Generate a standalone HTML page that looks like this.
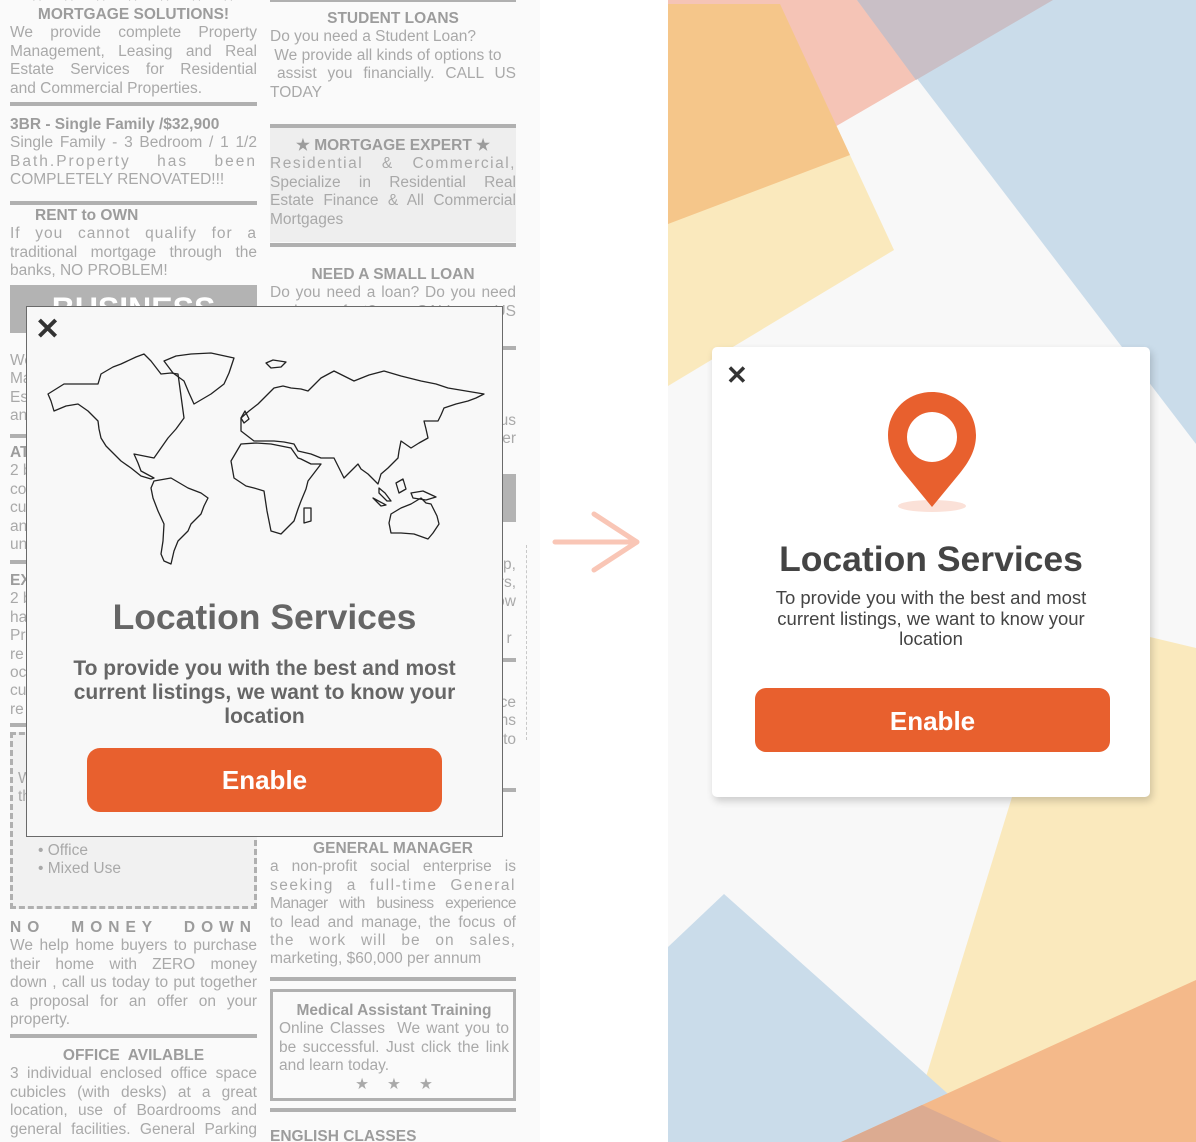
<!DOCTYPE html>
<html><head><meta charset="utf-8">
<style>
*{margin:0;padding:0;box-sizing:border-box}
body{width:1196px;height:1142px;position:relative;overflow:hidden;background:#fff;font-family:"Liberation Sans",sans-serif}
#left{position:absolute;left:0;top:0;width:540px;height:1142px;background:#fafafa;overflow:hidden}
.b{position:absolute;font-size:15.5px;line-height:18.4px;color:#a9a9a9}
.b div{white-space:nowrap}
.j{text-align:justify;text-align-last:justify;white-space:normal!important;height:18.4px;overflow:hidden}
.h{font-weight:bold;color:#9c9c9c;font-size:15.5px}
.c{text-align:center}
.rule{position:absolute;height:4px;background:#b0b0b0}
#lm{position:absolute;left:26px;top:306px;width:477px;height:531px;background:#f8f8f8;border:1.5px solid #6a6a6a}
.x{position:absolute;font-size:30px;font-weight:bold;line-height:1}
#right{position:absolute;left:668px;top:0;width:528px;height:1142px;background:#f8f8f8;overflow:hidden}
#rm{position:absolute;left:712px;top:347px;width:438px;height:450px;background:#fff;border-radius:5px;box-shadow:2px 4px 8px rgba(0,0,0,.18)}
.btn{position:absolute;background:#e8602e;color:#fff;font-weight:bold;text-align:center}
</style></head><body>
<div id="left">
 <div class="b" style="left:30px;top:-12px;color:#bbb;letter-spacing:18px">★★★★★★★</div>
 <div class="rule" style="left:270px;top:-2px;width:246px"></div>
 <div class="b" style="left:10px;top:6px;width:247px">
  <div class="h c">MORTGAGE SOLUTIONS!</div>
  <div class="j">We provide complete Property</div>
  <div class="j">Management, Leasing and Real</div>
  <div class="j">Estate Services for Residential</div>
  <div>and Commercial Properties.</div>
 </div>
 <div class="rule" style="left:10px;top:102px;width:247px"></div>
 <div class="b" style="left:10px;top:116px;width:247px">
  <div class="h">3BR - Single Family /$32,900</div>
  <div class="j">Single Family - 3 Bedroom / 1 1/2</div>
  <div class="j" style="letter-spacing:2px">Bath.Property has been</div>
  <div>COMPLETELY RENOVATED!!!</div>
 </div>
 <div class="rule" style="left:10px;top:201px;width:247px"></div>
 <div class="b" style="left:10px;top:207px;width:247px">
  <div class="h" style="padding-left:25px">RENT to OWN</div>
  <div class="j" style="letter-spacing:1px">If you cannot qualify for a</div>
  <div class="j">traditional mortgage through the</div>
  <div>banks, NO PROBLEM!</div>
 </div>
 <div style="position:absolute;left:10px;top:285px;width:247px;height:48px;background:#b3b3b3;color:#fff;font-weight:bold;font-size:32px;text-align:center;line-height:48px">BUSINESS</div>
 <div class="b" style="left:10px;top:352px;width:247px">
  <div>We provide all kinds</div><div>Management and more</div><div>Estate services</div><div>and more</div>
 </div>
 <div class="rule" style="left:10px;top:434px;width:247px"></div>
 <div class="b" style="left:10px;top:444px;width:247px">
  <div class="h">AT</div><div>2 bedroom</div><div>condo</div><div>cu</div><div>and</div><div>un</div>
 </div>
 <div class="rule" style="left:10px;top:560px;width:247px"></div>
 <div class="b" style="left:10px;top:572px;width:247px">
  <div class="h">EX</div><div>2 bed</div><div>ha</div><div>Pr</div><div>re</div><div>oc</div><div>cu</div><div>re</div>
 </div>
 <div class="rule" style="left:10px;top:723px;width:247px"></div>
 <div style="position:absolute;left:10px;top:732px;width:247px;height:177px;background:#f1f1f1;border:3px dashed #b0b0b0"></div>
 <div class="b" style="left:18px;top:770px"><div>We</div><div>th</div></div>
 <div class="b" style="left:38px;top:842px"><div>• Office</div><div>• Mixed Use</div></div>
 <div class="b" style="left:10px;top:919px;width:247px">
  <div class="h j" style="letter-spacing:6px">NO MONEY DOWN</div>
  <div class="j">We help home buyers to purchase</div>
  <div class="j">their home with ZERO money</div>
  <div class="j">down , call us today to put together</div>
  <div class="j">a proposal for an offer on your</div>
  <div>property.</div>
 </div>
 <div class="rule" style="left:10px;top:1034px;width:247px"></div>
 <div class="b" style="left:10px;top:1047px;width:247px">
  <div class="h c">OFFICE&nbsp; AVILABLE</div>
  <div class="j">3 individual enclosed office space</div>
  <div class="j">cubicles (with desks) at a great</div>
  <div class="j">location, use of Boardrooms and</div>
  <div class="j">general facilities. General Parking</div>
 </div>
 <div class="b" style="left:270px;top:10px;width:246px">
  <div class="h c">STUDENT LOANS</div>
  <div>Do you need a Student Loan?</div>
  <div>&nbsp;We provide all kinds of options to</div>
  <div class="j" style="padding-left:7px">assist you financially. CALL US</div>
  <div>TODAY</div>
 </div>
 <div class="rule" style="left:270px;top:124px;width:246px"></div>
 <div style="position:absolute;left:270px;top:128px;width:246px;height:114px;background:#eeeeee"></div>
 <div class="b" style="left:270px;top:137px;width:246px">
  <div class="h c">★ MORTGAGE EXPERT ★</div>
  <div class="j" style="letter-spacing:1.5px">Residential &amp; Commercial,</div>
  <div class="j">Specialize in Residential Real</div>
  <div class="j">Estate Finance &amp; All Commercial</div>
  <div>Mortgages</div>
 </div>
 <div class="rule" style="left:270px;top:243px;width:246px"></div>
 <div class="b" style="left:270px;top:266px;width:246px">
  <div class="h c">NEED A SMALL LOAN</div>
  <div class="j">Do you need a loan? Do you need</div>
  <div class="j">cash fast? CALL US</div>
 </div>
 <div class="rule" style="left:270px;top:346px;width:246px"></div>
 <div class="b" style="left:270px;top:412px;width:246px;text-align:right"><div>us</div><div>other</div></div>
 <div style="position:absolute;left:480px;top:474px;width:36px;height:48px;background:#b3b3b3"></div>
 <div class="b" style="left:270px;top:556px;width:246px;text-align:right"><div>up,</div><div>rs,</div><div>ow</div><div>&nbsp;</div><div>r&nbsp;</div></div>
 <div class="rule" style="left:270px;top:658px;width:246px"></div>
 <div class="b" style="left:270px;top:694px;width:246px;text-align:right"><div>ce</div><div>ns</div><div>to</div></div>
 <div class="rule" style="left:270px;top:788px;width:246px"></div>
 <div style="position:absolute;left:526px;top:545px;height:195px;border-left:1px dashed #c8c8c8"></div>
 <div class="b" style="left:270px;top:840px;width:246px">
  <div class="h c">GENERAL MANAGER</div>
  <div class="j">a non-profit social enterprise is</div>
  <div class="j" style="letter-spacing:1.5px">seeking a full-time General</div>
  <div class="j" style="letter-spacing:-.5px">Manager with business experience</div>
  <div class="j">to lead and manage, the focus of</div>
  <div class="j" style="letter-spacing:1px">the work will be on sales,</div>
  <div>marketing, $60,000 per annum</div>
 </div>
 <div class="rule" style="left:270px;top:977px;width:246px"></div>
 <div style="position:absolute;left:270px;top:989px;width:246px;height:112px;border:3px solid #b0b0b0"></div>
 <div class="b" style="left:279px;top:1002px;width:230px">
  <div class="h c">Medical Assistant Training</div>
  <div class="j">Online Classes&nbsp; We want you to</div>
  <div class="j">be successful. Just click the link</div>
  <div>and learn today.</div>
  <div class="c" style="letter-spacing:18px;padding-left:18px">★★★</div>
 </div>
 <div class="rule" style="left:270px;top:1108px;width:246px"></div>
 <div class="b" style="left:270px;top:1128px"><div class="h">ENGLISH CLASSES</div></div>

 <div id="lm">
  <div class="x" style="left:8px;top:8px;color:#333">✕</div>
  <svg style="position:absolute;left:-26px;top:-306px" width="540" height="700" fill="none" stroke="#222" stroke-width="1.3" stroke-linejoin="round">
   <path d="M47,393 L63,383 L97,383 L100,373 L112,366 L120,363 L135,356 L143,353 L150,360 L160,373 L170,372 L177,373 L180,395 L183,417 L175,428 L167,437 L160,447 L153,457 L143,455 L133,453 L137,462 L140,470 L153,477 L150,478 L140,475 L130,467 L120,460 L113,453 L105,445 L100,437 L98,428 L97,420 L87,410 L77,403 L65,405 L53,410 L50,400 Z"/>
   <path d="M163,360 L175,355 L190,353 L210,352 L233,357 L228,372 L223,383 L210,393 L193,403 L188,392 L183,380 L172,372 Z"/>
   <path d="M153,480 L170,477 L187,487 L200,492 L207,497 L203,505 L200,513 L190,523 L187,530 L177,540 L173,550 L170,563 L163,560 L160,553 L162,540 L163,523 L157,510 L152,497 L150,487 Z"/>
   <path d="M240,430 L240,417 L248,410 L257,403 L265,395 L273,387 L282,385 L290,387 L300,388 L307,390 L315,382 L320,377 L333,370 L345,376 L353,380 L368,374 L383,370 L400,375 L420,380 L435,383 L447,387 L465,390 L483,393 L475,397 L467,400 L455,403 L443,407 L440,414 L437,420 L423,420 L425,428 L427,437 L418,442 L410,447 L400,440 L398,450 L397,457 L387,467 L380,473 L377,483 L372,478 L367,473 L360,468 L357,463 L350,470 L343,477 L338,467 L333,457 L320,457 L310,453 L297,450 L293,443 L283,441 L273,440 L263,440 L253,440 Z"/>
   <path d="M240,443 L230,460 L233,477 L245,485 L253,487 L263,490 L266,510 L270,530 L280,533 L293,520 L297,508 L300,500 L305,488 L307,480 L320,463 L310,463 L300,458 L297,457 L290,447 L270,443 L255,442 Z"/>
   <path d="M303,507 L310,507 L310,520 L303,522 Z"/>
   <path d="M390,513 L400,507 L410,503 L420,497 L425,502 L430,503 L436,515 L438,523 L432,532 L427,538 L413,533 L400,532 L390,532 L388,522 Z"/>
   <path d="M265,362 L272,359 L285,361 L280,366 L270,367 Z"/>
   <path d="M378,487 L384,492 L390,500 L386,500 L378,492 Z M395,482 L402,478 L405,488 L398,492 Z M410,492 L422,490 L435,496 L425,499 L412,497 Z M372,497 L385,504 L380,505 Z"/>
   <path d="M240,417 L244,410 L248,418 L243,422 Z"/>
  </svg>
  <div style="position:absolute;left:0;top:290px;width:100%;text-align:center;font-size:35.5px;font-weight:bold;color:#666">Location Services</div>
  <div style="position:absolute;left:0;top:350px;width:100%;text-align:center;font-size:21px;line-height:24px;font-weight:bold;color:#666">To provide you with the best and most<br>current listings, we want to know your<br>location</div>
  <div class="btn" style="left:60px;top:441px;width:355px;height:64px;border-radius:13px;font-size:26px;line-height:64px">Enable</div>
 </div>
</div>

<svg style="position:absolute;left:0;top:0" width="668" height="1142">
 <path d="M555,542 L636,542 M594,514 L637,542 L594,570" fill="none" stroke="#f9c6b6" stroke-width="5" stroke-linecap="round" stroke-linejoin="round"/>
</svg>

<div id="right">
 <svg width="528" height="1142" style="position:absolute;left:0;top:0">
  <g transform="translate(-668,0)">
   <polygon points="668,4 780,4 894,250 668,386" fill="#fae9bd"/>
   <polygon points="668,0 1053,0 668,224" fill="#f5c4b6"/>
   <polygon points="668,4 780,4 850,155 668,224" fill="#f5c68a"/>
   <polygon points="857,0 1196,0 1196,444" fill="#cadcea"/>
   <polygon points="857,0 1053,0 916,80" fill="#c9bfc6"/>
   <polygon points="1150,637 1196,648 1196,1142 906,1142 1012,797" fill="#fae9bd"/>
   <polygon points="668,947 724,894 1002,1142 668,1142" fill="#cadcea"/>
   <polygon points="841,1142 1196,980 1196,1142" fill="#f4b98a"/>
   <polygon points="841,1142 922,1105 1002,1142" fill="#dcab91"/>
  </g>
 </svg>
</div>
<div id="rm">
 <div class="x" style="left:14px;top:15px;font-size:26px;color:#333">✕</div>
 <svg style="position:absolute;left:170px;top:40px" width="100" height="130">
  <ellipse cx="50" cy="119" rx="34" ry="6" fill="#fbe1d8"/>
  <path d="M50,5 C25,5 6,24 6,48 C6,64 14,76 22,86 L50,120 L78,86 C86,76 94,64 94,48 C94,24 75,5 50,5 Z M50,25 A25,25 0 1,0 50.01,25 Z" fill="#e8602e" fill-rule="evenodd"/>
 </svg>
 <div style="position:absolute;left:0;top:192px;width:100%;text-align:center;font-size:35.5px;font-weight:bold;color:#444">Location Services</div>
 <div style="position:absolute;left:0;top:241px;width:100%;text-align:center;font-size:18.5px;line-height:20.5px;color:#444">To provide you with the best and most<br>current listings, we want to know your<br>location</div>
 <div class="btn" style="left:43px;top:341px;width:355px;height:64px;border-radius:11px;font-size:26px;line-height:66px">Enable</div>
</div>
</body></html>
